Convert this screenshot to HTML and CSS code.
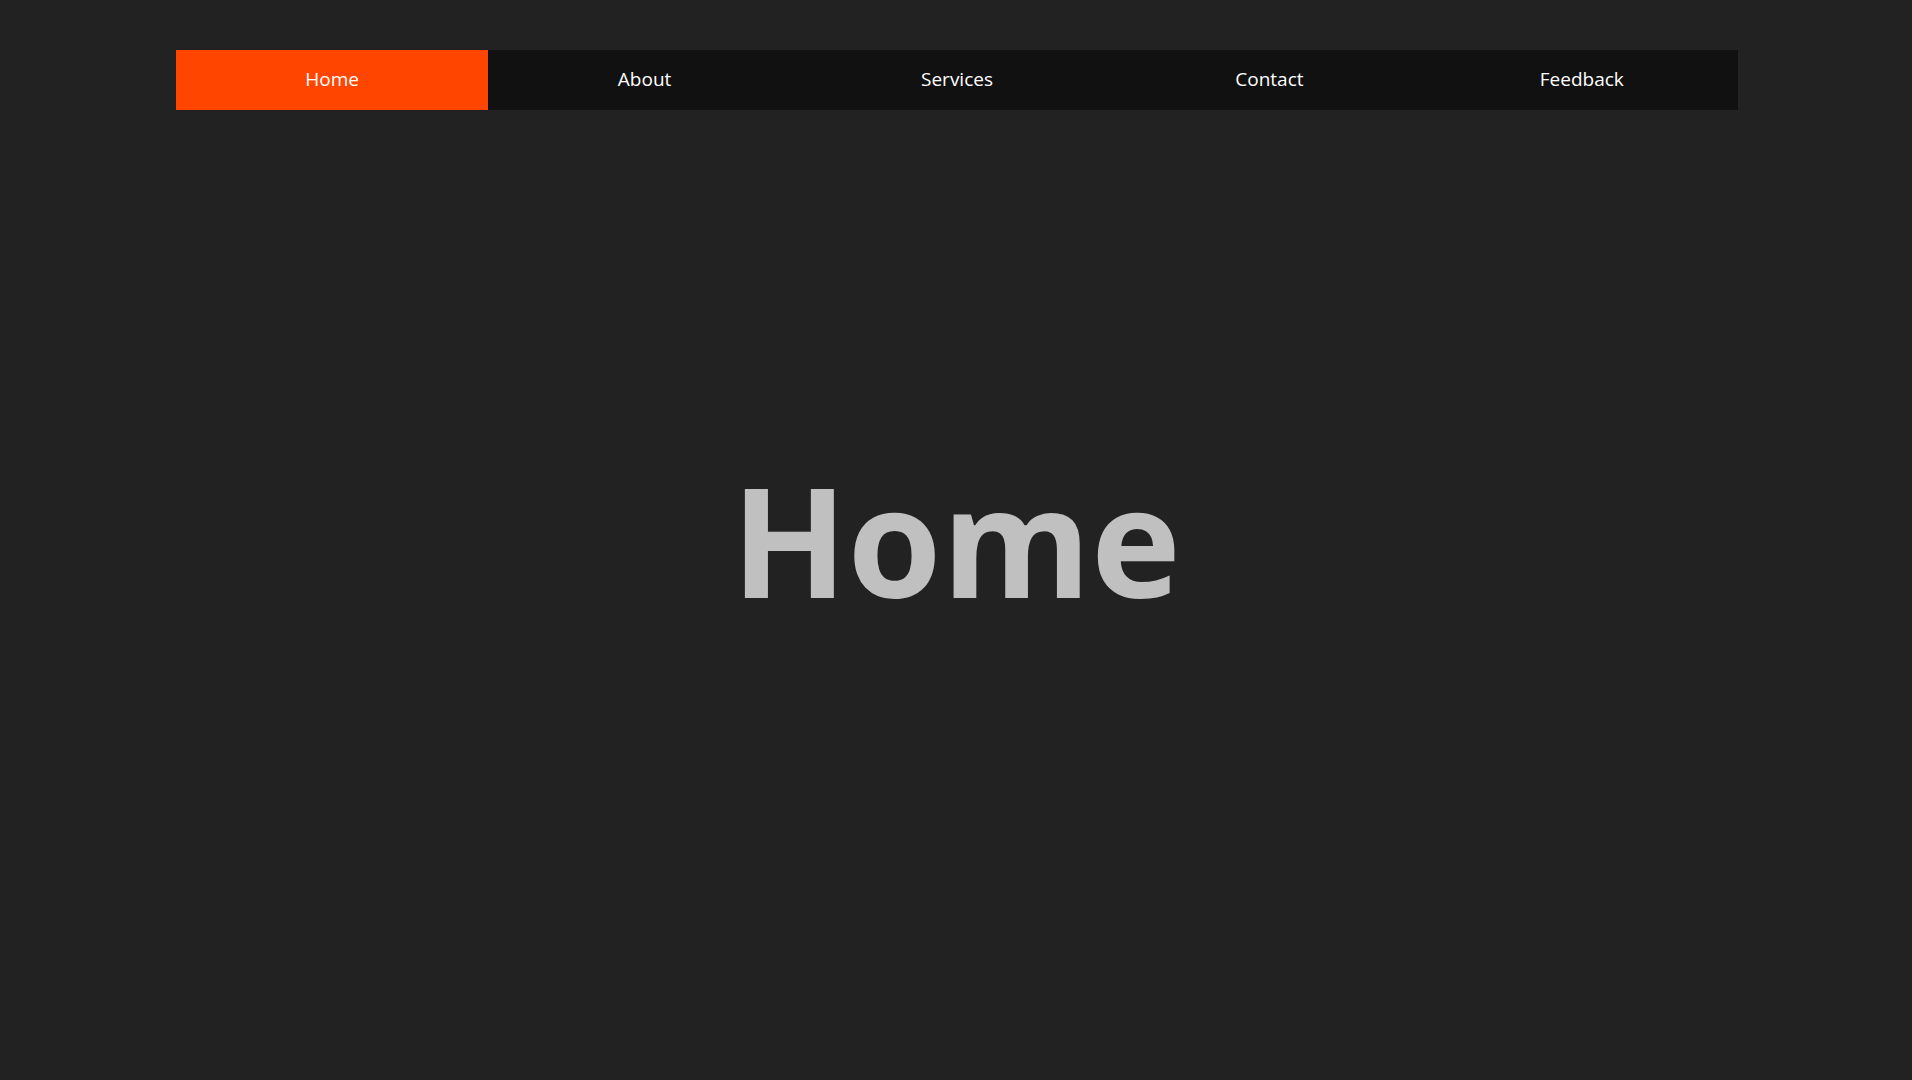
FILE: index.html
```html
<!DOCTYPE html>
<html lang="en">
<head>
<meta charset="utf-8">
<title>Home</title>
<link rel="stylesheet" href="styles.css">
</head>
<body>
<div class="page">
  <nav class="nav">
    <a class="nav-item active" href="#">Home</a>
    <a class="nav-item" href="#">About</a>
    <a class="nav-item" href="#">Services</a>
    <a class="nav-item" href="#">Contact</a>
    <a class="nav-item" href="#">Feedback</a>
  </nav>
  <main class="hero">
    <h1 class="hero-title">Home</h1>
  </main>
</div>
</body>
</html>
```
FILE: styles.css
```css
html, body {
  margin: 0;
  padding: 0;
  background: #222222;
  height: 100%;
}
.page {
  display: flex;
  flex-direction: column;
  height: 100vh;
  font-family: "Open Sans", "Noto Sans", sans-serif;
}
.nav {
  display: flex;
  margin: 50px 0 0 176px;
  width: 1562px;
  height: 60px;
  background: #111111;
}
.nav-item {
  flex: 1;
  display: flex;
  align-items: center;
  justify-content: center;
  padding-bottom: 2px;
  color: #ffffff;
  text-decoration: none;
  font-size: 19px;
}
.nav-item.active {
  background: #ff4500;
}
.hero {
  flex: 1;
  display: flex;
  align-items: center;
  justify-content: center;
  padding-bottom: 110px;
}
.hero-title {
  margin: 0;
  color: #c0c0c0;
  font-size: 152px;
  font-weight: 700;
  line-height: 1;
}
```
